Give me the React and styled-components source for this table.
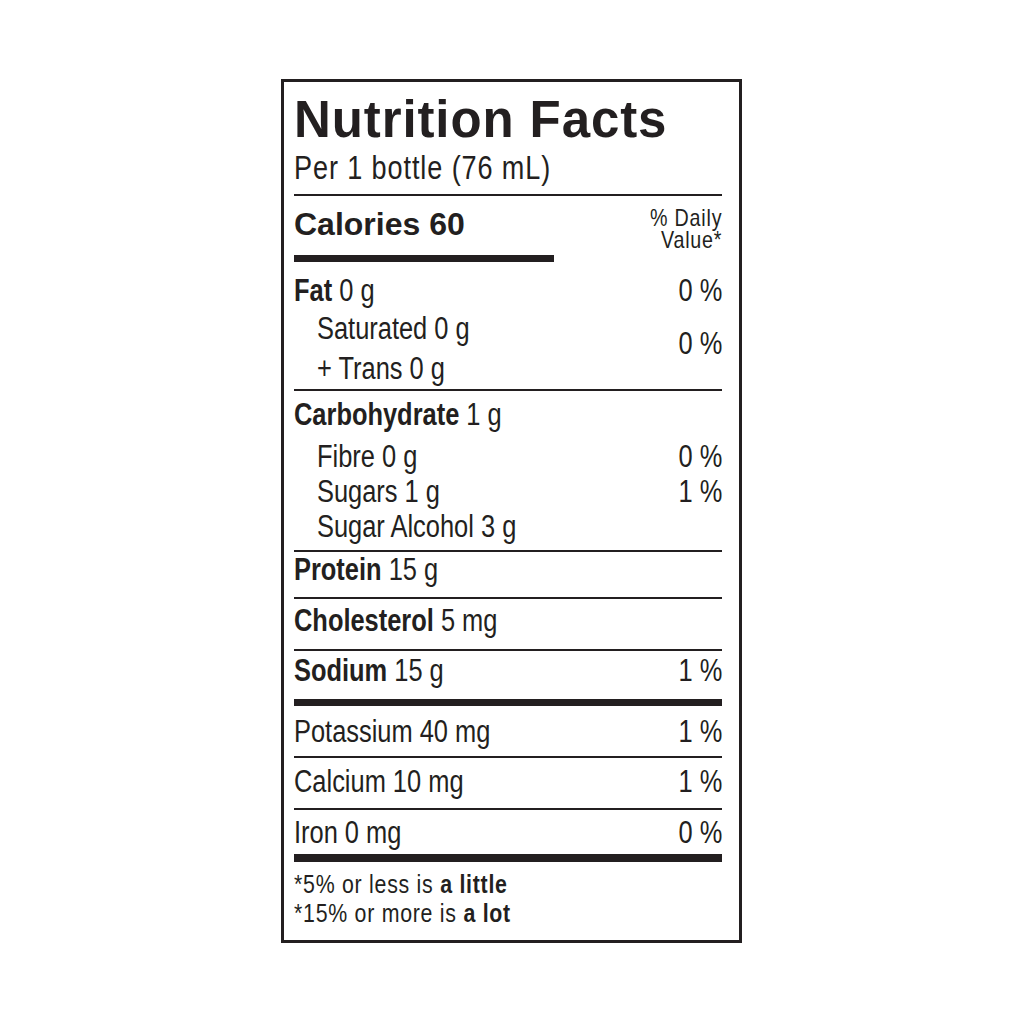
import React from 'react';
import styled, { createGlobalStyle } from 'styled-components';

const ink = '#231f20';

// no condensed face is installed, so the narrow type is a squeezed Liberation Sans
const squeeze = 'scaleX(0.82)';

const GlobalStyle = createGlobalStyle`
  body {
    margin: 0;
    background: #fff;
  }
`;

const Page = styled.div`
  display: flex;
  justify-content: center;
  align-items: flex-start;
  padding-top: 79px;
`;

const Label = styled.section`
  width: 461px;
  margin-right: 1px;
  box-sizing: border-box;
  border: 3px solid ${ink};
  padding: 0 17px 0 10px;
  color: ${ink};
  font-family: "Liberation Sans", Arial, sans-serif;
`;

const Header = styled.div`
  padding-bottom: 8px;
`;

const Title = styled.h1`
  margin: 12px 0 0;
  font-weight: 700;
  font-size: 51px;
  line-height: 52px;
  letter-spacing: 0.9px;
`;

const Serving = styled.div`
  margin-top: 4px;
  font-size: 33px;
  line-height: 36px;
  letter-spacing: 1.1px;
  white-space: nowrap;
  transform: ${squeeze};
  transform-origin: left center;
`;

const Rule = styled.div`
  height: ${p => p.$weight || 2}px;
  background: ${ink};
`;

const CalorieRow = styled.div`
  display: flex;
  justify-content: space-between;
  padding-top: 10px;
`;

const Calories = styled.div`
  font-weight: 700;
  font-size: 32px;
  line-height: 36px;
`;

const CalorieBar = styled.div`
  margin-top: 13px;
  width: 260px;
  height: 7px;
  background: ${ink};
`;

const DailyValue = styled.div`
  margin-top: 1px;
  font-size: 24px;
  line-height: 22px;
  letter-spacing: 1px;
  text-align: right;
  white-space: nowrap;
  transform: ${squeeze};
  transform-origin: right center;
`;

const Section = styled.div`
  padding: ${p => p.$top || 0}px 0 ${p => p.$bottom || 0}px;
`;

const Row = styled.div`
  display: flex;
  justify-content: space-between;
  align-items: baseline;
  padding-left: ${p => (p.$indent ? 23 : 0)}px;
  font-size: 31px;
  line-height: ${p => p.$lh || 36}px;
`;

const Narrow = styled.span`
  display: inline-block;
  white-space: nowrap;
  transform: ${squeeze};
  transform-origin: ${p => (p.$end ? 'right' : 'left')} center;
`;

const SubList = styled.div`
  padding-top: 6px;
`;

const Pair = styled.div`
  display: flex;
  justify-content: space-between;
  font-size: 31px;
`;

const PairLines = styled.div`
  padding-left: 23px;
  line-height: 40px;
`;

const PairPercent = styled(Narrow)`
  align-self: center;
  padding-bottom: 11px;
  line-height: 36px;
`;

const Nutrient = styled.b`
  font-weight: 700;
`;

const Footnote = styled.div`
  padding: 8px 0 12px;
  font-size: 26px;
  line-height: 29px;
  letter-spacing: 0.9px;
  white-space: nowrap;
  transform: ${squeeze};
  transform-origin: left center;

  b {
    font-weight: 700;
  }
`;

export default function App() {
  return (
    <Page>
      <GlobalStyle />
      <Label>
        <Header>
          <Title>Nutrition Facts</Title>
          <Serving>Per 1 bottle (76 mL)</Serving>
        </Header>
        <Rule />

        <CalorieRow>
          <div>
            <Calories>Calories 60</Calories>
            <CalorieBar />
          </div>
          <DailyValue>
            % Daily
            <br />
            Value*
          </DailyValue>
        </CalorieRow>

        <Section $top={11}>
          <Row>
            <Narrow><Nutrient>Fat</Nutrient> 0 g</Narrow>
            <Narrow $end>0 %</Narrow>
          </Row>
          <Pair>
            <PairLines>
              <Narrow>Saturated 0 g</Narrow>
              <br />
              <Narrow>+ Trans 0 g</Narrow>
            </PairLines>
            <PairPercent $end>0 %</PairPercent>
          </Pair>
        </Section>
        <Rule />

        <Section $top={6} $bottom={6}>
          <Row>
            <Narrow><Nutrient>Carbohydrate</Nutrient> 1 g</Narrow>
          </Row>
          <SubList>
            <Row $indent $lh={35}>
              <Narrow>Fibre 0 g</Narrow>
              <Narrow $end>0 %</Narrow>
            </Row>
            <Row $indent $lh={35}>
              <Narrow>Sugars 1 g</Narrow>
              <Narrow $end>1 %</Narrow>
            </Row>
            <Row $indent $lh={35}>
              <Narrow>Sugar Alcohol 3 g</Narrow>
            </Row>
          </SubList>
        </Section>
        <Rule />

        <Section $bottom={9}>
          <Row>
            <Narrow><Nutrient>Protein</Nutrient> 15 g</Narrow>
          </Row>
        </Section>
        <Rule />

        <Section $top={4} $bottom={10}>
          <Row>
            <Narrow><Nutrient>Cholesterol</Nutrient> 5 mg</Narrow>
          </Row>
        </Section>
        <Rule />

        <Section $top={2} $bottom={10}>
          <Row>
            <Narrow><Nutrient>Sodium</Nutrient> 15 g</Narrow>
            <Narrow $end>1 %</Narrow>
          </Row>
        </Section>
        <Rule $weight={7} />

        <Section $top={8} $bottom={6}>
          <Row>
            <Narrow>Potassium 40 mg</Narrow>
            <Narrow $end>1 %</Narrow>
          </Row>
        </Section>
        <Rule />

        <Section $top={6} $bottom={8}>
          <Row>
            <Narrow>Calcium 10 mg</Narrow>
            <Narrow $end>1 %</Narrow>
          </Row>
        </Section>
        <Rule />

        <Section $top={5} $bottom={3}>
          <Row>
            <Narrow>Iron 0 mg</Narrow>
            <Narrow $end>0 %</Narrow>
          </Row>
        </Section>
        <Rule $weight={8} />

        <Footnote>
          *5% or less is <b>a little</b>
          <br />
          *15% or more is <b>a lot</b>
        </Footnote>
      </Label>
    </Page>
  );
}
